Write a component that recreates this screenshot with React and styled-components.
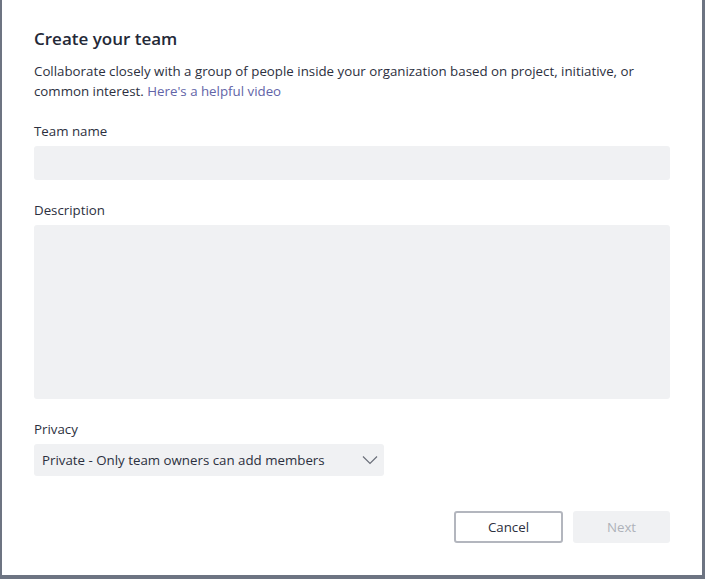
import React, { useState } from 'react';
import styled, { createGlobalStyle } from 'styled-components';

const GlobalStyle = createGlobalStyle`
  html, body {
    margin: 0;
    padding: 0;
    background: #6d7482;
  }
  * {
    box-sizing: border-box;
  }
`;

const App = () => {
  const [team, setTeam] = useState({ nombre: '', descripcion: '' });

  const handleChange = (e) => {
    setTeam({ ...team, [e.target.name]: e.target.value });
  };

  return (
    <Backdrop>
      <GlobalStyle />
      <Dialog>
        <Title>Create your team</Title>
        <Intro>
          Collaborate closely with a group of people inside your organization based on project, initiative, or
          <br />
          common interest. <HelpLink href="#">Here's a helpful video</HelpLink>
        </Intro>

        <Field>
          <Label>Team name</Label>
          <Input type="text" name="nombre" value={team.nombre} onChange={handleChange} />
        </Field>

        <Field>
          <Label>Description</Label>
          <TextArea name="descripcion" value={team.descripcion} onChange={handleChange} />
        </Field>

        <Field>
          <Label>Privacy</Label>
          <Select type="button">
            <span>Private - Only team owners can add members</span>
            <svg width="16" height="10" viewBox="0 0 16 10" fill="none">
              <path d="M1 1.5 L8 8.5 L15 1.5" stroke="#6b6f7a" strokeWidth="1.2" />
            </svg>
          </Select>
        </Field>

        <Botones>
          <BotonCancelar type="button">Cancel</BotonCancelar>
          <BotonSiguiente type="button" disabled>Next</BotonSiguiente>
        </Botones>
      </Dialog>
    </Backdrop>
  );
};

export default App;

const Backdrop = styled.div`
  width: 705px;
  height: 579px;
  padding-left: 2px;
  background: #6d7482;
  font-family: "Segoe UI", "Open Sans", "Noto Sans", sans-serif;
  color: #252836;
`;

const Dialog = styled.div`
  width: 700px;
  height: 575px;
  background: #ffffff;
  padding: 27px 32px 32px;
  display: flex;
  flex-direction: column;
`;

const Title = styled.h1`
  margin: 0;
  font-size: 17px;
  line-height: 24px;
  font-weight: 600;
  color: #242937;
`;

const Intro = styled.p`
  margin: 10px 0 0;
  font-size: 13.3px;
  line-height: 20px;
  color: #2c3040;
`;

const HelpLink = styled.a`
  color: #6264a7;
  text-decoration: none;
`;

const Field = styled.div`
  display: flex;
  flex-direction: column;
  gap: 5px;
  margin-top: 20px;
`;

const Label = styled.label`
  font-size: 13.3px;
  line-height: 20px;
  color: #2c3040;
`;

const Input = styled.input`
  height: 34px;
  border: none;
  border-radius: 3px;
  background: #f0f1f3;
  padding: 0 8px;
  font: inherit;
  font-size: 13.3px;
  &:focus {
    outline: none;
    border-bottom: 2px solid #6264a7;
  }
`;

const TextArea = styled.textarea`
  height: 174px;
  border: none;
  border-radius: 3px;
  background: #f0f1f3;
  padding: 6px 8px;
  resize: none;
  font: inherit;
  font-size: 13.3px;
  &:focus {
    outline: none;
  }
`;

const Select = styled.button`
  width: 350px;
  height: 32px;
  border: none;
  border-radius: 3px;
  background: #f0f1f3;
  padding: 0 6px 0 8px;
  display: flex;
  align-items: center;
  justify-content: space-between;
  font: inherit;
  font-size: 13.3px;
  color: #2c3040;
  cursor: pointer;
`;

const Botones = styled.div`
  display: flex;
  justify-content: flex-end;
  gap: 10px;
  margin-top: 35px;
`;

const BotonAccion = styled.button`
  height: 32px;
  border-radius: 3px;
  font: inherit;
  font-size: 13.3px;
  cursor: pointer;
`;

const BotonCancelar = styled(BotonAccion)`
  width: 109px;
  background: #ffffff;
  border: 2px solid #b3b6be;
  color: #2c3040;
`;

const BotonSiguiente = styled(BotonAccion)`
  width: 97px;
  background: #f0f1f3;
  border: none;
  color: #aeb1b9;
  cursor: default;
`;
